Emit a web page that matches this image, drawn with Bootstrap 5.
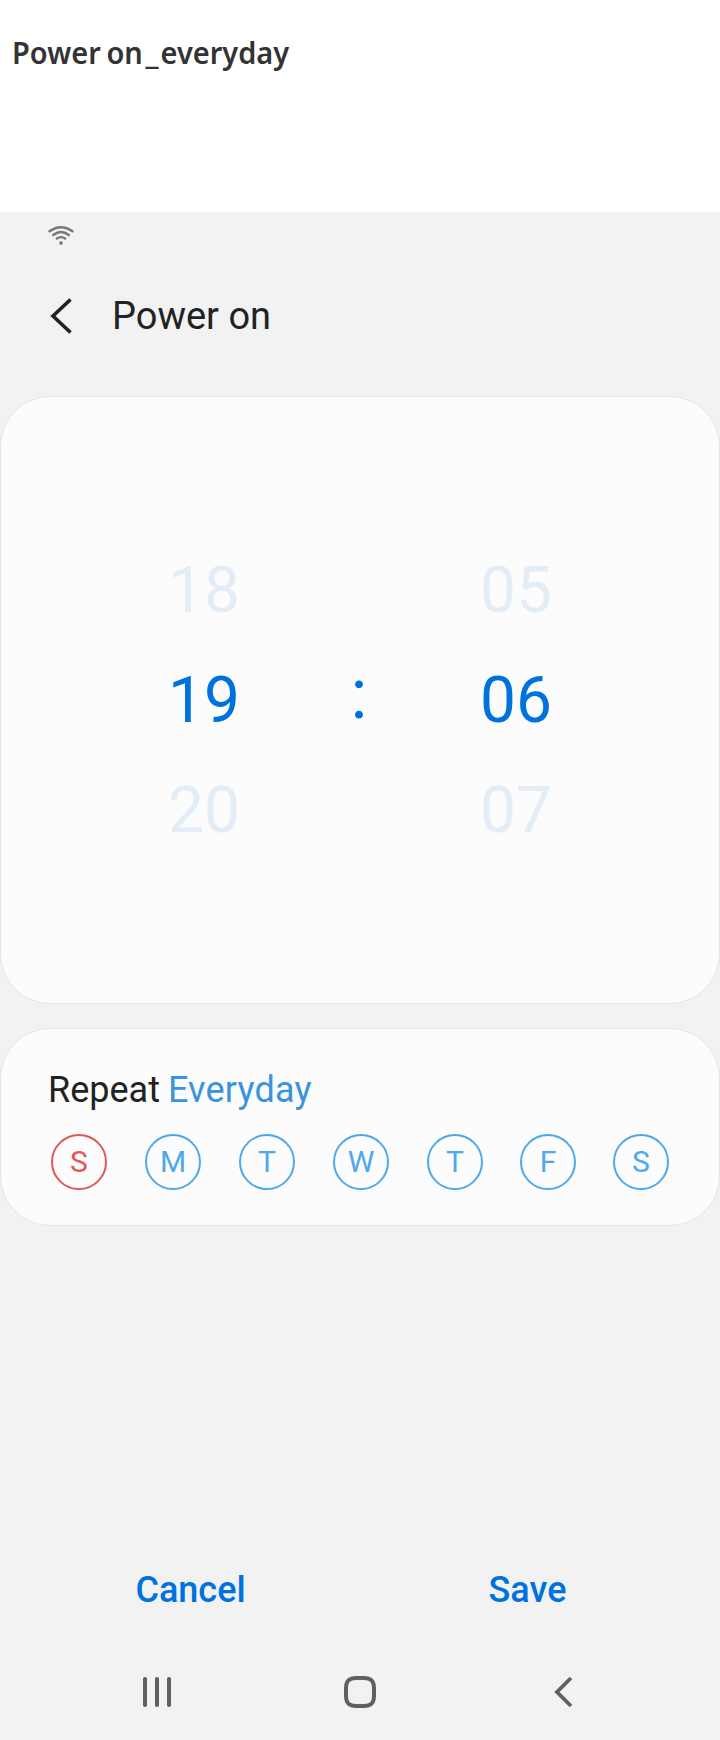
<!DOCTYPE html>
<html lang="en">
<head>
<meta charset="utf-8">
<meta name="viewport" content="width=device-width, initial-scale=1">
<title>Power on_everyday</title>
<link href="https://cdn.jsdelivr.net/npm/bootstrap@5.3.0/dist/css/bootstrap.min.css" rel="stylesheet">
<style>
body{font-family:Roboto,sans-serif;color:#222;background:#fff;overflow:hidden}
svg{display:block;flex:none}
.page-title{height:212px;padding:31px 0 0 12px}
.page-title h1{font:600 31px/42px "Noto Sans",sans-serif;color:#333;transform:scaleX(.935);transform-origin:0 0;white-space:nowrap;word-spacing:-2px;margin:0}
.page-title span{font-size:34px;font-weight:700;line-height:1;margin:0 2px 0 3px}
.phone{height:1528px;background:#f2f2f2}
.status{height:56px;padding:13px 0 0 48px}
.topbar{height:94px;padding:0 0 0 50px;gap:40px}
.topbar h2{font-size:38px;line-height:46px;font-weight:400;margin:1px 0 0}
.panel{background:#fcfcfc;border:1px solid #e4e4e4;border-radius:50px}
.picker{height:608px;margin-top:34px;padding-top:2px;font-size:64px;line-height:110px;color:#0072de}
.picker .slot{width:156px}
.dim{color:#e2edf8}
.colon{position:relative;top:-7px;left:-1px;font-size:70px}
.repeat{height:198px;margin-top:24px;padding:37px 47px 0 50px}
.repeat p{font-size:36px;line-height:48px;margin:0 0 20px -3px}
.repeat p span{color:#3a94dd;margin-left:-1px;letter-spacing:.2px}
.day{width:56px;height:56px;border:2px solid #4ea8ee;color:#4ea8ee;font-size:30px;line-height:30px;margin-right:38px;flex:none}
.day.sun{color:#e05858;border-color:#e05858}
.day.near{margin-right:37px}
.day:last-child{margin-right:0}
.actions{margin-top:340px;height:48px;padding:0 23px 0 22px}
.actions button{border:0;background:none;padding:0;color:#0072de;font-size:36px;line-height:48px;font-weight:500;width:337px}
.softkeys{margin-top:54px;height:48px;padding-left:141px}
.key-home{margin-left:171px}
.key-back{margin-left:178px}
</style>
</head>
<body>
<header class="page-title"><h1>Power on<span>_</span>everyday</h1></header>
<main class="phone d-flex flex-column">
  <div class="status">
    <svg width="27" height="20" viewBox="0 0 27 20" fill="none" stroke="#777" stroke-width="2.4" stroke-linecap="round"><path d="M1.5 6.3Q13 -1.9 24.5 6.3M5.2 10Q13 4 20.8 10M8.9 13.5Q13 10.8 17.1 13.5"/><circle cx="13" cy="18.1" r="1.8" fill="#777" stroke="none"/></svg>
  </div>
  <div class="topbar d-flex align-items-center">
    <svg width="22" height="38" viewBox="0 0 22 38" fill="none" stroke="#222" stroke-width="3.6"><path d="M20.5 3.5L3 20L20.5 36.5"/></svg>
    <h2>Power on</h2>
  </div>
  <section class="panel picker d-flex justify-content-center align-items-center text-center">
    <div class="slot"><div class="dim">18</div><div>19</div><div class="dim">20</div></div>
    <div class="slot colon">:</div>
    <div class="slot"><div class="dim">05</div><div>06</div><div class="dim">07</div></div>
  </section>
  <section class="panel repeat">
    <p>Repeat <span>Everyday</span></p>
    <div class="d-flex">
      <div class="day sun rounded-circle d-flex align-items-center justify-content-center">S</div>
      <div class="day rounded-circle d-flex align-items-center justify-content-center">M</div>
      <div class="day rounded-circle d-flex align-items-center justify-content-center">T</div>
      <div class="day rounded-circle d-flex align-items-center justify-content-center">W</div>
      <div class="day near rounded-circle d-flex align-items-center justify-content-center">T</div>
      <div class="day near rounded-circle d-flex align-items-center justify-content-center">F</div>
      <div class="day rounded-circle d-flex align-items-center justify-content-center">S</div>
    </div>
  </section>
  <div class="actions d-flex"><button type="button">Cancel</button><button type="button">Save</button></div>
  <nav class="softkeys d-flex align-items-center">
    <svg width="32" height="32" viewBox="0 0 32 32" fill="#606060"><rect x="2" y="1" width="4" height="30" rx="2"/><rect x="14" y="1" width="4" height="30" rx="2"/><rect x="26" y="1" width="4" height="30" rx="2"/></svg>
    <svg class="key-home" width="32" height="32" viewBox="0 0 32 32" fill="none" stroke="#606060" stroke-width="4"><path d="M12 2H20C27 2 30 5 30 12V20C30 27 27 30 20 30H12C5 30 2 27 2 20V12C2 5 5 2 12 2Z"/></svg>
    <svg class="key-back" width="20" height="32" viewBox="0 0 20 32" fill="none" stroke="#606060" stroke-width="3.8"><path d="M17 2L3 16L17 30"/></svg>
  </nav>
</main>
<script src="https://cdn.jsdelivr.net/npm/bootstrap@5.3.0/dist/js/bootstrap.bundle.min.js"></script>
</body>
</html>
